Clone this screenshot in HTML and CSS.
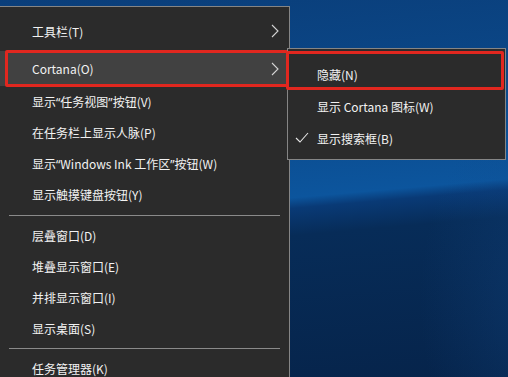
FILE: index.html
```html
<!DOCTYPE html>
<html lang="zh-CN">
<head>
    <meta charset="UTF-8">
    <meta name="viewport" content="width=device-width, initial-scale=1.0">
    <title>任务栏右键菜单</title>
    <link rel="stylesheet" href="styles.css">
</head>
<body>
    <div class="desktop">
        <div class="menu main-menu">
            <ul class="menu-list">
                <li class="menu-item item-first">
                    <span class="label">工具栏(T)</span>
                    <svg class="chevron" width="8" height="14" viewBox="0 0 8 14"><polyline points="1,1 7,7 1,13" fill="none" stroke="#d4d4d4" stroke-width="1.1"/></svg>
                </li>
                <li class="menu-item item-active">
                    <span class="label">Cortana(O)</span>
                    <svg class="chevron" width="8" height="14" viewBox="0 0 8 14"><polyline points="1,1 7,7 1,13" fill="none" stroke="#d4d4d4" stroke-width="1.1"/></svg>
                </li>
                <li class="menu-item"><span class="label">显示<span class="q">“</span>任务视图<span class="q">”</span>按钮(V)</span></li>
                <li class="menu-item"><span class="label">在任务栏上显示人脉(P)</span></li>
                <li class="menu-item"><span class="label">显示<span class="q">“</span>Windows Ink 工作区<span class="q">”</span>按钮(W)</span></li>
                <li class="menu-item"><span class="label">显示触摸键盘按钮(Y)</span></li>
                <li class="separator"></li>
                <li class="menu-item"><span class="label">层叠窗口(D)</span></li>
                <li class="menu-item"><span class="label">堆叠显示窗口(E)</span></li>
                <li class="menu-item"><span class="label">并排显示窗口(I)</span></li>
                <li class="menu-item"><span class="label">显示桌面(S)</span></li>
                <li class="separator separator-short"></li>
                <li class="menu-item"><span class="label">任务管理器(K)</span></li>
            </ul>
        </div>

        <div class="menu sub-menu">
            <ul class="menu-list">
                <li class="sub-item sub-active">
                    <span class="mark"></span>
                    <span class="label">隐藏(N)</span>
                </li>
                <li class="sub-item">
                    <span class="mark"></span>
                    <span class="label">显示 Cortana 图标(W)</span>
                </li>
                <li class="sub-item">
                    <span class="mark">
                        <svg width="14" height="12" viewBox="0 0 14 12"><polyline points="1,6 5,10 13,1" fill="none" stroke="#e6e6e6" stroke-width="1.1"/></svg>
                    </span>
                    <span class="label">显示搜索框(B)</span>
                </li>
            </ul>
        </div>
    </div>
</body>
</html>
```

FILE: styles.css
```css
body {
    margin: 0;
    padding: 0;
    font-family: "Noto Sans CJK SC", "Noto Sans", sans-serif;
    font-size: 12px;
    color: #f2f2f2;
}

/* Windows 10 desktop wallpaper */
.desktop {
    position: relative;
    width: 508px;
    height: 377px;
    overflow: hidden;
    background:
        radial-gradient(ellipse 120px 200px at 540px 300px, rgba(20, 75, 140, 0.35), transparent),
        linear-gradient(175deg, #0a3e7a 0%, #0b4889 30%, #0c559d 53%, #093a76 55.5%, #072c58 62%, #06244b 100%);
}

.menu {
    position: absolute;
    box-sizing: border-box;
    background-color: #2b2b2b;
    border: 1px solid #858585;
}

.menu-list {
    list-style: none;
    margin: 0;
    padding: 0;
}

/* Main context menu */
.main-menu {
    left: -1px;
    top: 6px;
    width: 291px;
    height: 400px;
    padding-top: 8px;
}

.menu-item {
    position: relative;
    display: flex;
    align-items: center;
    height: 31px;
    padding: 0 10px 0 32px;
}

/* narrow curly quotes, as in the Windows UI font */
.q {
    font-family: "Noto Sans", sans-serif;
}

.item-first {
    height: 32px;
}

.item-active {
    height: 35px;
    margin-top: 4px;
    background-color: #414141;
}

.item-active::after {
    content: "";
    position: absolute;
    left: 5px;
    right: -3px;
    top: -1px;
    bottom: -1px;
    border: 3px solid #e1271f;
    border-radius: 2px;
}

.chevron {
    margin-left: auto;
}

.separator {
    height: 10px;
    display: flex;
    align-items: center;
    margin: 0 9px;
}

.separator::before {
    content: "";
    flex: 1;
    height: 1px;
    background-color: #8a8a8a;
}

.separator-short {
    height: 9px;
}

/* Cortana submenu */
.sub-menu {
    left: 287px;
    top: 48px;
    width: 219px;
    padding: 9px 0 5px;
}

.sub-item {
    position: relative;
    display: flex;
    align-items: center;
    height: 32px;
}

.sub-active::after {
    content: "";
    position: absolute;
    left: -2px;
    right: 1px;
    top: -7px;
    bottom: 0;
    border: 3px solid #e1271f;
    border-radius: 2px;
}

.mark {
    display: flex;
    align-items: center;
    width: 22px;
    height: 100%;
    padding-left: 7px;
}
```
